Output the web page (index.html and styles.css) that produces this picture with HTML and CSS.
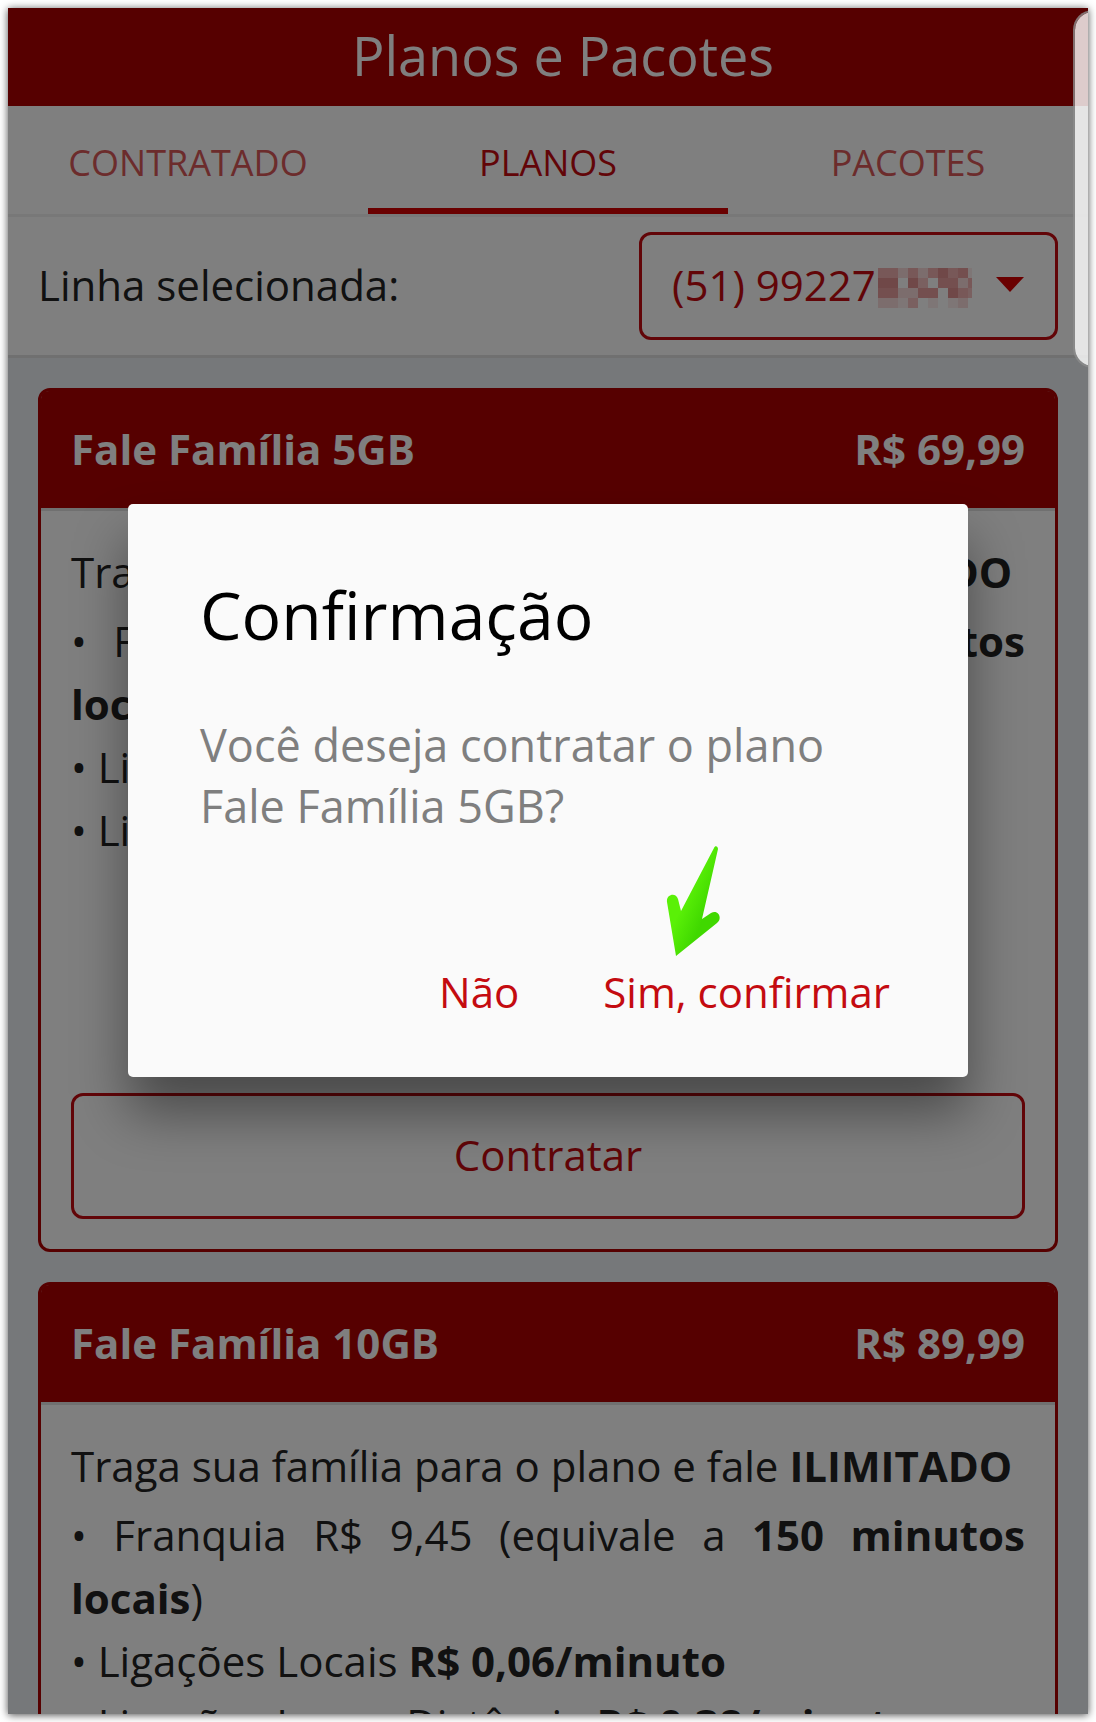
FILE: index.html
```html
<!DOCTYPE html>
<html lang="pt-BR">
<head>
    <meta charset="UTF-8">
    <meta name="viewport" content="width=device-width, initial-scale=1.0">
    <title>Planos e Pacotes</title>
    <link rel="stylesheet" href="styles.css">
</head>
<body>
    <div class="screen">
        <header class="app-header">
            <h1>Planos e Pacotes</h1>
        </header>

        <!-- Abas -->
        <nav class="tabs">
            <a href="#contratado" class="tab">CONTRATADO</a>
            <a href="#planos" class="tab active">PLANOS</a>
            <a href="#pacotes" class="tab">PACOTES</a>
        </nav>

        <!-- Linha selecionada -->
        <div class="line-row">
            <label for="linha">Linha selecionada:</label>
            <div class="line-select">
                <select id="linha">
                    <option>(51) 99227</option>
                </select>
                <!-- final do número oculto -->
                <svg class="mask" viewBox="0 0 94 40" shape-rendering="crispEdges" aria-hidden="true">
                    <path fill="#fcecec" d="M20 30h10v10H20zM50 30h10v10H50zM70 30h10v10H70zM90 0h4v10H90z"/>
                    <path fill="#f8dada" d="M20 0h10v10H20zM40 0h10v10H40zM80 10h10v10H80zM20 20h20v10H20zM0 30h20v10H0zM80 30h10v10H80zM20 10h10v10H20z"/>
                    <path fill="#f4c0c0" d="M40 10h10v10H40zM30 30h10v10H30zM90 20h4v10H90z"/>
                    <path fill="#f0b0b0" d="M0 0h20v10H0zM30 0h10v10H30zM50 0h10v10H50zM70 0h10v10H70zM90 10h4v10H90zM80 20h10v10H80z"/>
                    <path fill="#e89e9e" d="M80 0h10v10H80zM60 10h20v10H60zM40 20h20v10H40zM0 20h20v10H0z"/>
                    <path fill="#e09090" d="M60 0h10v10H60zM0 10h20v10H0zM30 10h10v10H30zM70 20h10v10H70z"/>
                    <path fill="#fff" d="M20 10h10v10H20zM50 10h10v10H50z"/>
                </svg>
                <svg class="caret" viewBox="0 0 28 15" aria-hidden="true"><path d="M0 0h28L14 15z" fill="#d40000"/></svg>
            </div>
        </div>

        <!-- Planos -->
        <main class="plans">
            <section class="plan">
                <div class="plan-header">
                    <h2>Fale Família 5GB</h2>
                    <span>R$ 69,99</span>
                </div>
                <div class="plan-body">
                    <p>Traga sua família para o plano e fale <b>ILIMITADO</b></p>
                    <p>• Franquia R$ 9,45 (equivale a <b>150 minutos locais</b>)<br>
                    • Ligações Locais <b>R$ 0,06/minuto</b><br>
                    • Ligações Longa Distância <b>R$ 0,38/minuto</b></p>
                    <button class="btn-plan" type="button">Contratar</button>
                </div>
            </section>

            <section class="plan">
                <div class="plan-header">
                    <h2>Fale Família 10GB</h2>
                    <span>R$ 89,99</span>
                </div>
                <div class="plan-body">
                    <p>Traga sua família para o plano e fale <b>ILIMITADO</b></p>
                    <p>• Franquia R$ 9,45 (equivale a <b>150 minutos locais</b>)<br>
                    • Ligações Locais <b>R$ 0,06/minuto</b><br>
                    • Ligações Longa Distância <b>R$ 0,38/minuto</b></p>
                    <button class="btn-plan" type="button">Contratar</button>
                </div>
            </section>
        </main>

        <!-- Confirmação -->
        <div class="overlay">
            <div class="dialog" role="dialog" aria-modal="true" aria-labelledby="dialogTitle">
                <h2 id="dialogTitle">Confirmação</h2>
                <p>Você deseja contratar o plano Fale Família 5GB?</p>
                <div class="dialog-actions">
                    <button type="button">Não</button>
                    <button type="button">Sim, confirmar</button>
                </div>
                <svg class="arrow" viewBox="0 0 54 112" aria-hidden="true">
                    <defs>
                        <linearGradient id="green" gradientUnits="userSpaceOnUse" x1="15" y1="62" x2="38" y2="72">
                            <stop offset="0" stop-color="#5af007"/>
                            <stop offset="1" stop-color="#40d800"/>
                        </linearGradient>
                    </defs>
                    <path fill="url(#green)" d="M10 111 1 57C0 49 10 47 12 54L15 66 48 3C49 0 52 1 52 4L36 74 45 68C52 64 57 73 51 78Z"/>
                </svg>
            </div>
        </div>

        <div class="edge-handle"></div>
    </div>
</body>
</html>
```

FILE: styles.css
```css
* {
    box-sizing: border-box;
}

body {
    margin: 0;
    padding: 8px;
    background: #fff;
    font-family: "Open Sans", "Noto Sans", sans-serif;
    font-size: 42px;
    line-height: 63px;
    color: #222;
}

h1, h2, p {
    margin: 0;
}

button, select {
    font: inherit;
    cursor: pointer;
}

.screen {
    position: relative;
    height: calc(100vh - 16px);
    overflow: hidden;
    background: #ecf0f4;
}

/* sombra em volta da tela */
body::before {
    content: "";
    position: fixed;
    inset: 8px;
    box-shadow: 0 1px 8px rgba(0,0,0,0.7);
}

/* Cabeçalho */
.app-header {
    padding: 11px 0 15px 30px;
    background: #ac0000;
    color: #fff;
    text-align: center;
}

.app-header h1 {
    font-size: 54px;
    font-weight: normal;
    line-height: 72px;
}

/* Abas */
.tabs {
    display: grid;
    grid-template-columns: repeat(3, 1fr);
    background: #fff;
    border-bottom: 3px solid #f0f0f0;
}

.tab {
    padding: 30px 0 18px;
    border-bottom: 6px solid transparent;
    color: #d85858;
    font-size: 36px;
    line-height: 54px;
    text-align: center;
    text-decoration: none;
}

.tab.active {
    border-color: #d40000;
    color: #c40b10;
}

/* Linha selecionada */
.line-row {
    display: flex;
    align-items: center;
    justify-content: space-between;
    padding: 15px 30px;
    background: #fff;
    border-bottom: 3px solid #e0e0e0;
}

.line-row label {
    padding-bottom: 4px;
}

.line-select {
    position: relative;
}

.line-select select {
    width: 419px;
    height: 108px;
    padding: 0 30px 4px;
    appearance: none;
    background: #fff;
    border: 3px solid #c40b10;
    border-radius: 12px;
    color: #c40b10;
}

.mask {
    position: absolute;
    top: 36px;
    left: 239px;
    width: 94px;
    height: 40px;
}

.caret {
    position: absolute;
    top: 45px;
    right: 34px;
    width: 28px;
    height: 15px;
    pointer-events: none;
}

/* Planos */
.plans {
    display: flex;
    flex-direction: column;
    gap: 30px;
    padding: 30px;
}

.plan {
    display: flex;
    flex-direction: column;
    flex-shrink: 0;
    min-height: 864px;
    background: #fff;
    border: 3px solid #ac0000;
    border-radius: 12px;
}

.plan-header {
    display: flex;
    justify-content: space-between;
    padding: 26px 30px 28px;
    background: #ac0000;
    border-bottom: 3px solid #e0e0e0;
    border-radius: 8px 8px 0 0;
    color: #fff;
    font-weight: bold;
}

.plan-header h2 {
    font-size: 42px;
}

.plan-body {
    display: flex;
    flex: 1;
    flex-direction: column;
    gap: 6px;
    padding: 29px 30px 30px;
    text-align: justify;
}

.btn-plan {
    height: 126px;
    margin-top: auto;
    padding-bottom: 5px;
    background: none;
    border: 3px solid #c40b10;
    border-radius: 12px;
    color: #c40b10;
}

/* Janela de confirmação */
.overlay {
    position: absolute;
    inset: 0;
    display: flex;
    align-items: center;
    justify-content: center;
    padding: 0 120px 141px;
    background: rgba(0,0,0,0.5);
}

.dialog {
    position: relative;
    width: 100%;
    padding: 65px 54px 39px 72px;
    background: #fafafa;
    border-radius: 5px;
    box-shadow: 0 36px 54px rgba(0,0,0,0.42);
}

.dialog h2 {
    margin-bottom: 55px;
    color: #000;
    font-size: 66px;
    font-weight: normal;
    line-height: 90px;
}

.dialog p {
    padding-right: 60px;
    color: #7f7f7f;
    font-size: 45px;
    line-height: 61px;
}

.dialog-actions {
    display: flex;
    justify-content: flex-end;
    gap: 36px;
    margin-top: 109px;
}

.dialog-actions button {
    padding: 15px 24px;
    background: none;
    border: none;
    color: #c40b10;
}

/* seta sobre o botão de confirmar */
.arrow {
    position: absolute;
    right: 248px;
    bottom: 120px;
    width: 54px;
    height: 112px;
}

.edge-handle {
    position: absolute;
    top: 2px;
    right: -25px;
    width: 40px;
    height: 358px;
    background: rgba(255,255,255,0.8);
    background-clip: padding-box;
    border: 2px solid rgba(140,140,140,0.8);
    border-radius: 20px;
}
```
